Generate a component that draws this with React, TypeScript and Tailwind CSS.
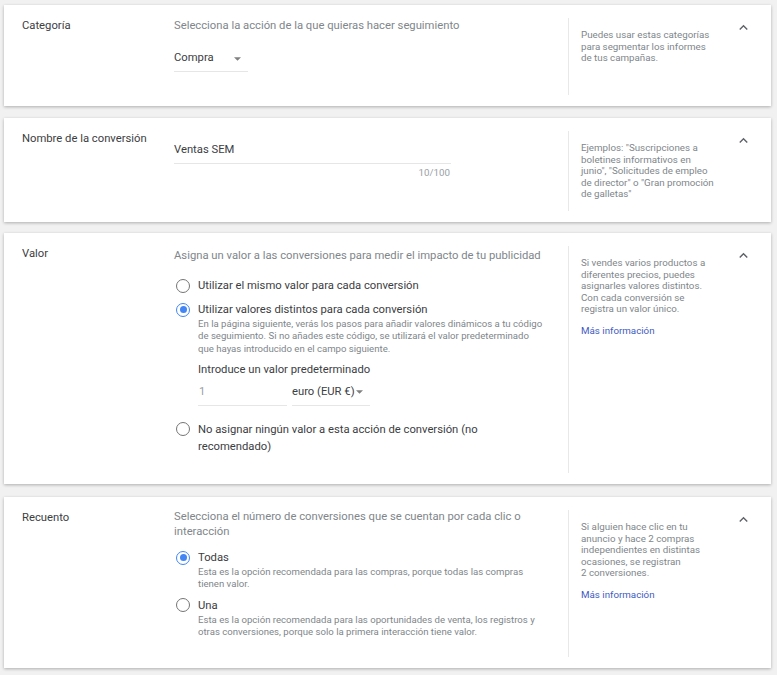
import React from 'react';
import clsx from 'clsx';

// Icono "expand_less" de Material
const ExpandLess = () => (
  <svg viewBox="0 0 24 24" className="h-[17px] w-[17px] fill-[#5f6368]">
    <path d="M12 8l-6 6 1.41 1.41L12 10.83l4.59 4.58L18 14z" />
  </svg>
);

const DropArrow = () => (
  <svg viewBox="0 0 8 4" className="h-[4px] w-[7px] fill-[#808080]">
    <polygon points="0,0 8,0 4,4" />
  </svg>
);

const Radio: React.FC<{ checked?: boolean }> = ({ checked }) => (
  <span
    className={clsx(
      'mt-[1.5px] flex h-[14px] w-[14px] shrink-0 items-center justify-center rounded-full border-[1.5px]',
      checked ? 'border-[#4285f4]' : 'border-[#757575]'
    )}
  >
    {checked && <span className="h-[7px] w-[7px] rounded-full bg-[#4285f4]" />}
  </span>
);

const RadioRow: React.FC<{ checked?: boolean; label: React.ReactNode; hint?: React.ReactNode; children?: React.ReactNode; className?: string }> = ({ checked, label, hint, children, className }) => (
  <div className={clsx('flex items-start gap-2 pl-[2px]', className)}>
    <Radio checked={checked} />
    <div>
      <div className="text-[11.25px] leading-[17px] text-[#3c4043]">{label}</div>
      {hint && <div className="text-[9.6px] leading-[12.25px] text-[#80868b]">{hint}</div>}
      {children}
    </div>
  </div>
);

const Card: React.FC<{ title: string; side: React.ReactNode; height: string; className?: string; children: React.ReactNode }> = ({ title, side, height, className, children }) => (
  <section className={clsx('ml-1 flex w-[767px] bg-white shadow-[0_1px_3px_rgba(0,0,0,0.28)]', height, className)}>
    <div className="w-[170px] shrink-0 pl-[18px] pt-[13px] text-[11.25px] leading-[16px] text-[#3c4043]">{title}</div>
    <div className="w-[394px] shrink-0 pt-[13px]">{children}</div>
    <div className="mb-[11px] mt-[13px] w-px shrink-0 bg-[#e8e8e8]" />
    <div className="w-[150px] shrink-0 pl-3 pt-[24px] text-[9.75px] leading-[11.5px] text-[#80868b]">{side}</div>
    <div className="flex-1 pl-4 pt-[14px]">
      <ExpandLess />
    </div>
  </section>
);

const MoreInfo = () => <div className="mt-[10px] text-[9.75px] text-[#3f5bbf]">Más información</div>;

export default function App() {
  return (
    <div className="min-h-[675px] bg-[#f1f1f1] pb-2 pt-[5px] font-['Roboto','Open_Sans',sans-serif]">
      <Card
        title="Categoría"
        height="h-[101px]"
        side={<>Puedes usar estas categorías<br />para segmentar los informes<br />de tus campañas.</>}
      >
        <p className="text-[11.25px] leading-[16px] text-[#80868b]">Selecciona la acción de la que quieras hacer seguimiento</p>
        <div className="mt-[12px] flex h-[26px] w-[74px] items-center border-b border-[#e6e6e6] text-[11.25px] text-[#3c4043]">
          Compra
          <span className="ml-auto mr-[7px] flex">
            <DropArrow />
          </span>
        </div>
      </Card>

      <Card
        title="Nombre de la conversión"
        height="h-[104px]"
        className="mt-3"
        side={<>Ejemplos: "Suscripciones a<br />boletines informativos en<br />junio", "Solicitudes de empleo<br />de director" o "Gran promoción<br />de galletas"</>}
      >
        <div className="mt-[7px] flex h-[26px] w-[277px] items-center border-b border-[#e6e6e6] text-[11.25px] text-[#3c4043]">Ventas SEM</div>
        <div className="mt-[3px] w-[276px] text-right text-[9.75px] leading-[12px] text-[#9aa0a6]">10/100</div>
      </Card>

      <Card
        title="Valor"
        height="h-[251px]"
        className="mt-[11px]"
        side={
          <>
            Si vendes varios productos a<br />diferentes precios, puedes<br />asignarles valores distintos.<br />Con cada conversión se<br />registra un valor único.
            <MoreInfo />
          </>
        }
      >
        <p className="pt-[2px] text-[11.25px] leading-[16px] text-[#80868b]">Asigna un valor a las conversiones para medir el impacto de tu publicidad</p>
        <RadioRow className="mt-[13px]" label="Utilizar el mismo valor para cada conversión" />
        <RadioRow
          checked
          className="mt-[7px]"
          label="Utilizar valores distintos para cada conversión"
          hint={<>En la página siguiente, verás los pasos para añadir valores dinámicos a tu código<br />de seguimiento. Si no añades este código, se utilizará el valor predeterminado<br />que hayas introducido en el campo siguiente.</>}
        >
          <div className="mt-[8px] text-[11.25px] leading-[14px] text-[#3c4043]">Introduce un valor predeterminado</div>
          <div className="mt-[3px] flex gap-[5px]">
            <div className="flex h-[26px] w-[89px] items-center border-b border-[#e6e6e6] pl-px text-[11.25px] text-[#9aa0a6]">1</div>
            <div className="flex h-[26px] w-[78px] items-center border-b border-[#e6e6e6] text-[11.25px] text-[#3c4043]">
              euro (EUR €)
              <span className="ml-auto mr-[7px] flex">
                <DropArrow />
              </span>
            </div>
          </div>
        </RadioRow>
        <RadioRow className="mt-[15px]" label={<>No asignar ningún valor a esta acción de conversión (no<br />recomendado)</>} />
      </Card>

      <Card
        title="Recuento"
        height="h-[171px]"
        className="mt-[13px]"
        side={
          <>
            Si alguien hace clic en tu<br />anuncio y hace 2 compras<br />independientes en distintas<br />ocasiones, se registran<br />2 conversiones.
            <MoreInfo />
          </>
        }
      >
        <p className="-mt-px text-[11.25px] leading-[15px] text-[#80868b]">Selecciona el número de conversiones que se cuentan por cada clic o<br />interacción</p>
        <RadioRow
          checked
          className="mt-[10px]"
          label="Todas"
          hint={<>Esta es la opción recomendada para las compras, porque todas las compras<br />tienen valor.</>}
        />
        <RadioRow
          className="mt-[6px]"
          label="Una"
          hint={<>Esta es la opción recomendada para las oportunidades de venta, los registros y<br />otras conversiones, porque solo la primera interacción tiene valor.</>}
        />
      </Card>
    </div>
  );
}
